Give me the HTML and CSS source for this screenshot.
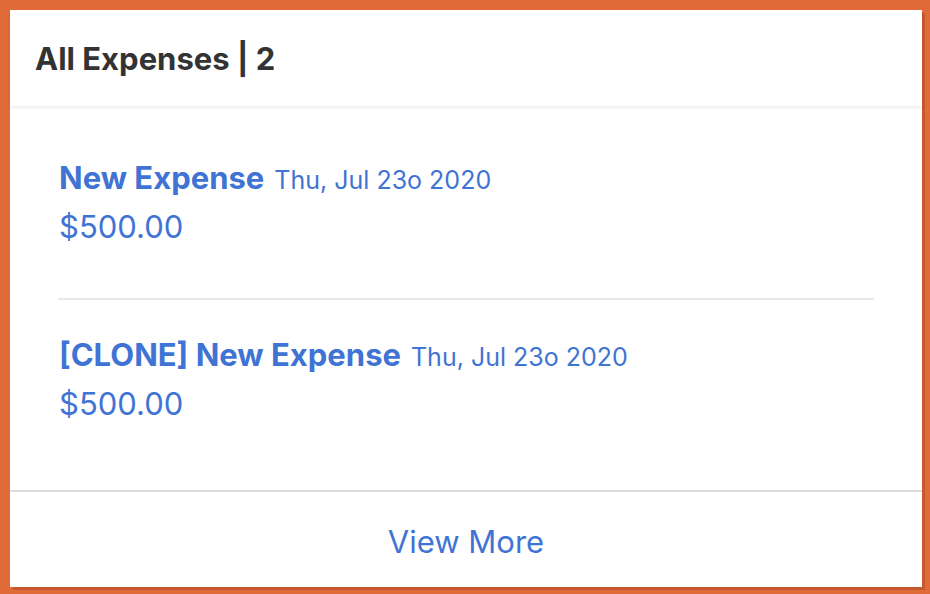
FILE: index.html
```html
<!DOCTYPE html>
<html>
<head>
<meta charset="utf-8">
<link rel="stylesheet" href="styles.css">
</head>
<body>
<div class="card">
  <div class="card-header">
    <h2 class="title">All Expenses | 2</h2>
  </div>
  <div class="list">
    <div class="item">
      <div class="item-title"><span class="name">New Expense</span><span class="date">Thu, Jul 23o 2020</span></div>
      <div class="amount">$500.00</div>
    </div>
    <div class="item">
      <div class="item-title"><span class="name">[CLONE] New Expense</span><span class="date">Thu, Jul 23o 2020</span></div>
      <div class="amount">$500.00</div>
    </div>
  </div>
  <div class="footer">View More</div>
</div>
</body>
</html>
```
FILE: styles.css
```css
html, body {
  margin: 0;
  padding: 0;
}
body {
  background: #e06a38;
  padding: 10px 8px 7px 10px;
  font-family: Inter, "Noto Sans", sans-serif;
  height: 594px;
  box-sizing: border-box;
  overflow: hidden;
}
.card {
  background: #fff;
  width: 912px;
  height: 577px;
  box-shadow: 3px 3px 0 rgba(120, 40, 10, 0.25);
  display: flex;
  flex-direction: column;
}
.card-header {
  flex-shrink: 0;
  height: 96px;
  box-sizing: border-box;
  padding: 0 25px;
  display: flex;
  align-items: center;
  box-shadow: 0 2px 3px rgba(0, 0, 0, 0.07);
  position: relative;
  z-index: 1;
}
.title {
  margin: 0;
  font-size: 31px;
  font-weight: 700;
  color: #333;
}
.list {
  flex-shrink: 0;
  padding: 17px 48px 15px;
}
.item {
  padding: 38px 0 54px 1px;
}
.item + .item {
  border-top: 2px solid #e8e8e8;
}
.item-title {
  display: flex;
  align-items: baseline;
  gap: 10px;
  color: #3f74d4;
}
.name {
  font-size: 31px;
  line-height: 34px;
  font-weight: 700;
}
.date {
  font-size: 25px;
  line-height: 1;
}
.amount {
  margin-top: 15px;
  line-height: 34px;
  font-size: 31px;
  color: #3f74d4;
}
.footer {
  flex-shrink: 0;
  border-top: 2px solid #ddd;
  padding: 33px 0 28px;
  line-height: 34px;
  font-size: 31px;
  color: #3f74d4;
  text-align: center;
}
```
